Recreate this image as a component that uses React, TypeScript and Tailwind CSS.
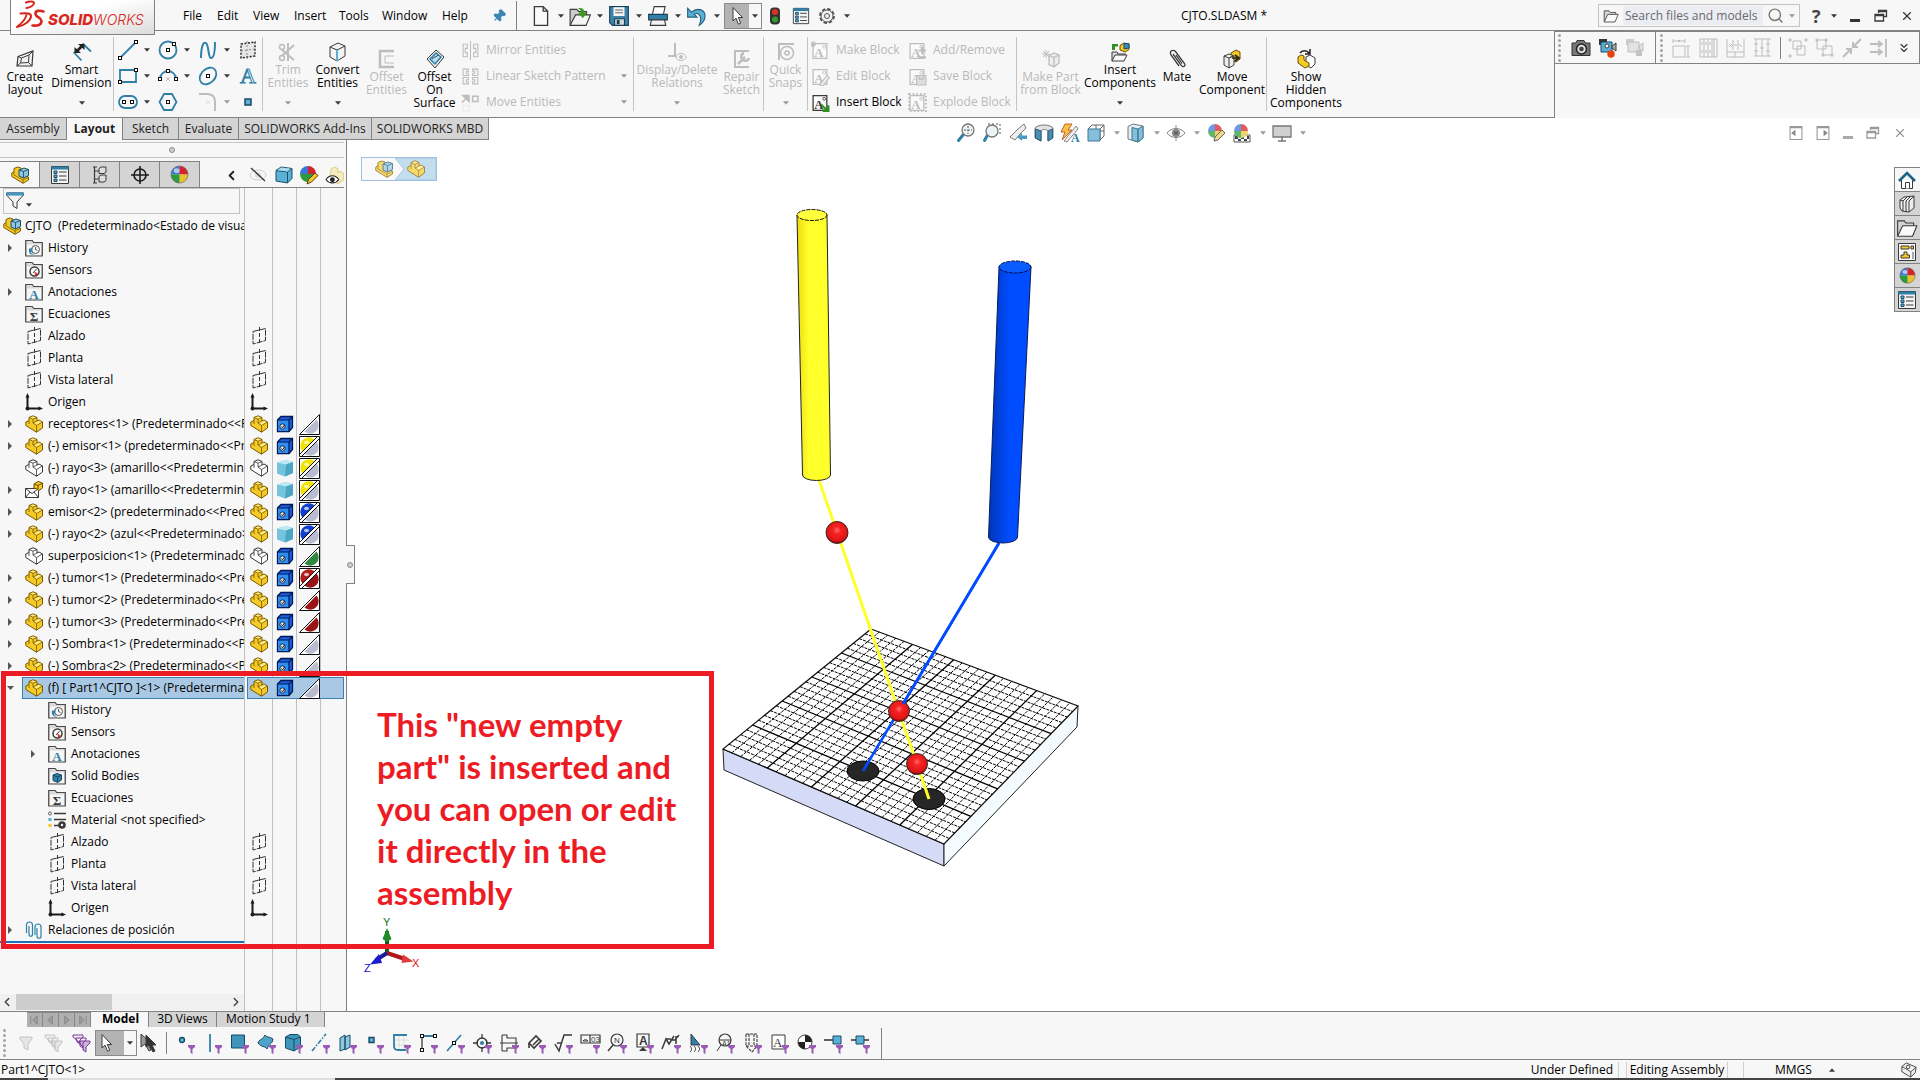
import type { ReactNode } from "react";
import { ChevronLeft, ChevronRight, ChevronsDown, Pin, Search, X } from "lucide-react";
import { clsx } from "clsx";

const DARK = "#3a3a3a";
const BLUE = "#2f7fa8";
const SKY = "#5bb0d6";
const GOLD = "#f5c926";
const MUTED = "#bdbdbd";

interface IconProps {
  size?: number;
  box?: number;
  children: ReactNode;
}

function Icon({ size = 18, box = 18, children }: IconProps) {
  return (
    <svg width={size} height={size} viewBox={`0 0 ${box} ${box}`} fill="none" className="shrink-0" aria-hidden="true">
      {children}
    </svg>
  );
}

function Caret({ muted = false, up = false }: { muted?: boolean; up?: boolean }) {
  return (
    <svg width={6} height={4} viewBox="0 0 7 4" className="shrink-0" aria-hidden="true">
      <path d={up ? "M0 4h7L3.5 0z" : "M0 0h7L3.5 4z"} fill={muted ? "#9a9a9a" : DARK} />
    </svg>
  );
}

/* ---------- shared glyphs ---------- */

function PartIcon({ hollow = false, size = 18 }: { hollow?: boolean; size?: number }) {
  const line = hollow ? "#333" : "#7a5a00";
  return (
    <Icon size={size}>
      <path
        d="M4 2.500 8 .8l4 1.700V6l2-1 3.500 2v6L11.500 17.200.8 10.500V7L4 5.500z"
        fill={hollow ? "#fff" : GOLD}
        stroke={line}
        strokeLinejoin="round"
      />
      <path d="M4 2.500 8 4.200l4-1.700M8 4.200V8l3.500 2.500 6-3.500M11.500 10.500v6.700M4 5.500V9M12 6 8 8" stroke={line} strokeWidth={0.800} />
      {!hollow && <path d="M5.200 2.500 8 1.400l2.800 1.100L8 3.600zM9.500 8 14 5.700 16.300 7l-4.800 2.700z" fill="#fdea8f" />}
    </Icon>
  );
}

function AssemblyIcon({ size = 18 }: { size?: number }) {
  return (
    <Icon size={size}>
      <path d="M3 2.500 6.500 1 10 2v6l7.500 3v3L12 17.300.8 10.500V7L3 5.500z" fill={GOLD} stroke="#7a5a00" strokeLinejoin="round" />
      <path d="M3 5.500V9l9 5v3.300M12 14l5-2.500" stroke="#7a5a00" strokeWidth={0.800} />
      <path d="M8 4 13 2l4.500 1.500v6L12.500 12 8 10z" fill="#8cc6e0" stroke="#1d4e68" strokeLinejoin="round" />
      <path d="M8 4 12.500 5.500V12M12.500 5.500l5-2" stroke="#1d4e68" strokeWidth={0.900} />
    </Icon>
  );
}

function FolderIcon({ children }: { children: ReactNode }) {
  return (
    <Icon>
      <path d="M.7 17V1.500h6.500l1.500 2H17.300V17z" fill="#d9d9d9" stroke="#4a4a4a" strokeWidth={1.200} />
      <path d="M2 5.500h14v10.600H2z" fill="#f6f6f6" />
      {children}
    </Icon>
  );
}

function PlaneIcon() {
  return (
    <Icon>
      <path d="M3 4.500 15.500 1.500V13.500L3 17z" stroke="#333" strokeDasharray="6 1" />
      <path d="M9.500 0v18" stroke="#333" strokeDasharray="4 2" />
    </Icon>
  );
}

function OriginIcon() {
  return (
    <Icon>
      <path d="M2.500 3v12.500H15" stroke="#1b1b1b" strokeWidth={2} />
      <path d="M.5 4.500 2.500 0l2 4.500zM13.500 13.500 18 15.500l-4.500 2z" fill="#1b1b1b" />
      <circle cx={2.500} cy={15.500} r={2} fill="#1b1b1b" />
    </Icon>
  );
}

function BallIcon({ size = 20 }: { size?: number }) {
  return (
    <Icon size={size} box={20}>
      <path d="M10 10V1a9 9 0 0 0-9 9z" fill="#3d74d9" />
      <path d="M10 10h9a9 9 0 0 0-9-9z" fill="#d4232b" />
      <path d="M10 10v9a9 9 0 0 0 9-9z" fill="#e8c12f" />
      <path d="M10 10H1a9 9 0 0 0 9 9z" fill="#2c9b3b" />
      <ellipse cx={7} cy={6} rx={3} ry={2.500} fill="#fff" opacity={0.600} />
      <circle cx={10} cy={10} r={9} stroke="#555" strokeWidth={0.600} />
    </Icon>
  );
}

function CubeIcon({ size = 18 }: { size?: number }) {
  return (
    <Icon size={size}>
      <path d="M1 4.500 6 1l11 1.500v10L12.500 17 1 15z" fill={SKY} stroke="#1d4e68" />
      <path d="M1 4.500 12.500 6v11M12.500 6 17 2.500" stroke="#1d4e68" />
      <path d="M2.200 4.200 6.200 1.500l9.600 1.300L12.400 5.500z" fill="#a9dcf0" />
    </Icon>
  );
}

function ListIcon({ size = 20 }: { size?: number }) {
  return (
    <Icon size={size} box={20}>
      <path d="M1.500 1.500h17v17h-17z" fill="#f3f3f3" stroke={DARK} />
      <path d="M1.500 1.500h17v3h-17z" fill={BLUE} />
      {[7, 11, 15].map((y) => (
        <g key={y}>
          <path d={`M4 ${y - 1}h3v2.500H4z`} fill={SKY} stroke="#174a66" />
          <path d={`M9 ${y}h7.500`} stroke={DARK} />
        </g>
      ))}
    </Icon>
  );
}

function OpenFolder({ size = 20 }: { size?: number }) {
  return (
    <Icon size={size} box={20}>
      <path d="M1.500 17V3.500h6l1.500 2h7V8" fill="#d4d4d4" stroke={DARK} />
      <path d="M1.500 17.500 6 8h13l-4 9.500z" fill="#fafafa" stroke={DARK} strokeLinejoin="round" />
    </Icon>
  );
}

function PointerIcon() {
  return (
    <Icon size={20} box={20}>
      <path d="M6 1.500V15l3-2.800 2.500 6 2.200-1-2.400-5.700H15.500z" fill="#fff" stroke={DARK} strokeLinejoin="round" />
    </Icon>
  );
}

function RestoreIcon({ color }: { color: string }) {
  return (
    <Icon size={14} box={14}>
      <path d="M4.500 4V1.500h8v6H10M4.500 2.500h8" stroke={color} strokeWidth={1.300} />
      <path d="M1 5.500h8.500v6.500H1zM1 6.500h8.500" stroke={color} strokeWidth={1.300} />
    </Icon>
  );
}

/* ---------- title bar ---------- */

const MENUS = [
  { label: "File", width: "w-[34px]" },
  { label: "Edit", width: "w-[36px]" },
  { label: "View", width: "w-[41px]" },
  { label: "Insert", width: "w-[45px]" },
  { label: "Tools", width: "w-[43px]" },
  { label: "Window", width: "w-[60px]" },
  { label: "Help", width: "w-[42px]" },
];

const QUICK_TOOLS: { label: string; icon: ReactNode }[] = [
  {
    label: "New",
    icon: <path d="M4 1.500h8l4 4v13H4zM12 1.500v4h4" fill="#fafafa" stroke={DARK} strokeWidth={1.200} />,
  },
  {
    label: "Open",
    icon: (
      <>
        <path d="M1 18.500V4h6l2 2h7v3" fill="#ccc" stroke={DARK} />
        <path d="M1 18.500 6 9h13.500l-4 9.500z" fill="#f4f4f4" stroke={DARK} />
        <path d="M8 3c4-1 6 1 6 4h2.500L12.500 12 8.500 7H11c0-2-1-3-3-4z" fill="#3c9a1c" />
      </>
    ),
  },
  {
    label: "Save",
    icon: (
      <>
        <path d="M1.500 1.500h17v17H4l-2.500-2.500z" fill="#3d83a8" stroke="#173f57" />
        <path d="M5 2h10v8H5z" fill="#f5f5f5" />
        <path d="M6.500 4.500h7M6.500 7h7" stroke="#666" />
        <path d="M6 12.500h9v6H6z" fill="#cfd8dc" stroke="#173f57" />
        <path d="M8 13.500h2.500v4H8z" fill="#173f57" />
      </>
    ),
  },
  {
    label: "Print",
    icon: (
      <>
        <path d="M5 8 6.500 1.500h10L15 8" fill="#fff" stroke={DARK} />
        <path d="M1.500 8.500h17v5h-17z" fill={BLUE} stroke="#173f57" />
        <path d="M4 13.500h12l1 5H3z" fill="#f3f3f3" stroke={DARK} />
      </>
    ),
  },
  {
    label: "Undo",
    icon: <path d="M1.500 3v8H10L7.300 8.300c4-1.800 7 1 5.700 7.200l-1 3c7-4.500 7.500-14-1-14.500-2.300 0-4.200.9-6 2.500z" fill={SKY} stroke="#22607f" />,
  },
];

function Logo() {
  return (
    <div className="relative z-20 ml-[10px] h-[35px] w-[145px] shrink-0 border border-t-0 border-[#828282] bg-linear-to-br from-white from-40% to-[#dcdcdc]">
      <svg width={143} height={34} viewBox="0 0 143 34" role="img" aria-label="SOLIDWORKS">
        <g stroke="#d9261c" fill="none" strokeWidth={2} strokeLinecap="round" strokeLinejoin="round">
          <path d="M15 2.500c3-1.500 8-1.500 8 .5 0 2.500-4 4.500-7.500 5" />
          <path d="M9.500 13.500c6-.5 11-.5 10.500 3C19.500 21 13 26 6 27c5-4 9-8 9.500-12.500" />
          <path d="M32.500 11.500c-4-1.500-8.500-1-8 2.500s6 3.500 6 7c0 4-4 5-9 4.500" strokeWidth={2.600} />
        </g>
        <text x={37} y={25} fill="#d9261c" fontFamily="Inter, sans-serif" fontStyle="italic" fontSize={15}>
          <tspan fontWeight={800}>SOLID</tspan>
          <tspan fontWeight={300} fontSize={14}>
            WORKS
          </tspan>
        </text>
      </svg>
    </div>
  );
}

function TitleBar() {
  return (
    <header className="flex h-[31px] items-center border-b border-[#828282] bg-[#f7f7f7] pt-px">
      <div className="-mt-px self-start">
        <Logo />
      </div>
      <nav className="ml-7 flex" aria-label="Main menu">
        {MENUS.map((m) => (
          <button key={m.label} type="button" className={clsx("text-left", m.width)}>
            {m.label}
          </button>
        ))}
      </nav>
      <Pin size={14} className="mx-2 rotate-45 fill-[#3b86b5] text-[#3b86b5]" />
      <div className="ml-[2px] flex h-[30px] items-center border-l border-[#828282] pl-[13px]">
        {QUICK_TOOLS.map((tool) => (
          <button key={tool.label} type="button" aria-label={tool.label} className="flex w-[39px] items-center gap-[6px]">
            <Icon size={22} box={20}>
              {tool.icon}
            </Icon>
            <Caret />
          </button>
        ))}
        <button type="button" aria-label="Select" className="-ml-px flex h-[26px] w-[38px] items-center border border-[#8a8a8a]">
          <span className="flex h-full w-6 items-center justify-center bg-[#b3b3b3]">
            <PointerIcon />
          </span>
          <span className="flex flex-1 justify-center">
            <Caret />
          </span>
        </button>
        <button type="button" aria-label="Rebuild" className="ml-1">
          <Icon size={18}>
            <rect x={4} y={0.500} width={10} height={17} rx={4} fill="#333" />
            <circle cx={9} cy={5} r={3} fill="#e0301e" />
            <circle cx={9} cy={12.500} r={3} fill="#2f9a2f" />
          </Icon>
        </button>
        <button type="button" aria-label="Options" className="ml-2">
          <ListIcon size={18} />
        </button>
        <button type="button" aria-label="Settings" className="ml-2 flex items-center gap-2">
          <Icon size={18}>
            <circle cx={9} cy={9} r={7} stroke="#555" strokeWidth={1.800} strokeDasharray="3.500 2" />
            <circle cx={9} cy={9} r={6} fill="#f2f2f2" stroke="#555" />
            <circle cx={9} cy={9} r={2.500} stroke="#555" />
          </Icon>
          <Caret />
        </button>
      </div>
      <h1 className="flex-1 text-center">CJTO.SLDASM *</h1>
      <div className="flex h-[23px] w-[202px] items-center border border-[#c4c4c4] px-1">
        <OpenFolder size={16} />
        <input
          type="text"
          aria-label="Search files and models"
          placeholder="Search files and models"
          className="ml-1 h-[19px] w-[140px] bg-[#ebedf2] px-[2px] placeholder:text-[#6a6a6a]"
        />
        <Search size={19} className="ml-1 text-[#777]" />
        <span className="ml-[5px]">
          <Caret muted />
        </span>
      </div>
      <button type="button" aria-label="Help" className="ml-3 flex w-[30px] items-center gap-[10px] text-[18px] font-bold text-[#444]">
        ?<Caret />
      </button>
      <button type="button" aria-label="Minimize" className="ml-2 flex h-3 w-[10px] items-end">
        <span className="h-[3px] w-full bg-[#333]" />
      </button>
      <button type="button" aria-label="Restore" className="ml-[14px]">
        <RestoreIcon color={DARK} />
      </button>
      <button type="button" aria-label="Close" className="ml-[12px] mr-[6px]">
        <X size={14} className="text-[#333]" />
      </button>
    </header>
  );
}

/* ---------- ribbon ---------- */

interface BigToolProps {
  label: string;
  width: string;
  icon: ReactNode;
  disabled?: boolean;
  menu?: boolean;
}

function BigTool({ label, width, icon, disabled = false, menu = false }: BigToolProps) {
  return (
    <button
      type="button"
      disabled={disabled}
      className={clsx(
        "flex shrink-0 flex-col items-center leading-[13px]",
        width,
        menu ? "pt-[11px]" : "pt-[18px]",
        disabled ? "text-[#b9b9b9]" : "text-black"
      )}
    >
      <Icon size={20} box={20}>
        {icon}
      </Icon>
      <span className="mt-px whitespace-pre text-center">{label}</span>
      {menu && (
        <span className="mt-3">
          <Caret muted={disabled} />
        </span>
      )}
    </button>
  );
}

interface SmallTool {
  label: string;
  icon: ReactNode;
  menu?: boolean;
  enabled?: boolean;
}

function SmallTools({ tools, width }: { tools: SmallTool[]; width: string }) {
  return (
    <div className={clsx("flex shrink-0 flex-col pt-[6px]", width)}>
      {tools.map((t) => (
        <button
          key={t.label}
          type="button"
          disabled={!t.enabled}
          className={clsx("flex h-[26px] items-center whitespace-nowrap pl-[3px] pr-[6px]", t.enabled ? "text-black" : "text-[#b9b9b9]")}
        >
          <Icon size={19}>{t.icon}</Icon>
          <span className="ml-[6px] flex-1 text-left">{t.label}</span>
          {t.menu && <Caret muted />}
        </button>
      ))}
    </div>
  );
}

function Divider() {
  return <div className="my-[6px] w-px shrink-0 bg-[#c4c4c4]" />;
}

const node = (x: number, y: number) => <rect x={x - 1.500} y={y - 1.500} width={3} height={3} fill="#fff" stroke="#111" />;

const SKETCH_TOOLS: { label: string; icon: ReactNode; menu?: boolean; muted?: boolean }[] = [
  { label: "Line", menu: true, icon: <><path d="M2 18 18 2" stroke={BLUE} strokeWidth={1.800} />{node(2, 18)}{node(18, 2)}</> },
  { label: "Circle", menu: true, icon: <><circle cx={10} cy={10} r={8.500} stroke={BLUE} strokeWidth={1.800} />{node(10, 10)}{node(16, 4)}</> },
  { label: "Spline", menu: true, icon: <path d="M3 18C3 8 5 1 8 3s2 15 5 15 4-8 4-16" stroke={BLUE} strokeWidth={2} /> },
  { label: "Plane", icon: <><path d="M3 4 17 2v14L3 18z" fill="#e6e6e6" stroke="#222" strokeDasharray="2 1.500" strokeWidth={1.400} /><path d="M9 1v18M3 11l14-2" stroke="#888" strokeDasharray="2 2" /></> },
  { label: "Rectangle", menu: true, icon: <><path d="M2 4h16v12H2z" stroke={BLUE} strokeWidth={1.800} />{node(18, 4)}{node(2, 16)}</> },
  { label: "Arc", menu: true, icon: <><path d="M2 13a8 8 0 0 1 16 0" stroke={BLUE} strokeWidth={1.800} /><path d="m8 11 4 4m0-4-4 4" stroke={MUTED} />{node(10, 5)}{node(2, 13)}{node(18, 13)}</> },
  { label: "Ellipse", menu: true, icon: <><ellipse cx={10} cy={10} rx={9.500} ry={7} transform="rotate(-45 10 10)" stroke={BLUE} strokeWidth={1.800} />{node(10, 10)}</> },
  { label: "Text", icon: <text x={2} y={17} fontSize={22} fontFamily="Liberation Serif, serif" fill="#fff" stroke={BLUE}>A</text> },
  { label: "Slot", menu: true, icon: <><rect x={1} y={4} width={18} height={12} rx={6} stroke={BLUE} strokeWidth={1.800} />{node(6, 10)}{node(14, 10)}</> },
  { label: "Polygon", icon: <><path d="M6 2h8l4.500 8-4.500 8H6L1.500 10z" stroke={BLUE} strokeWidth={1.800} />{node(10, 10)}</> },
  { label: "Fillet", menu: true, muted: true, icon: <><path d="M1 2h8c6 0 8 3 8 8v9" stroke={MUTED} strokeWidth={2} /><path d="m8 8 4 4m0-4-4 4" stroke="#ddd" /></> },
  { label: "Point", icon: <rect x={7} y={7} width={6} height={6} fill={SKY} stroke="#174a66" strokeWidth={1.500} /> },
];

const ENTITY_TOOLS: SmallTool[] = [
  { label: "Mirror Entities", icon: <path d="M9 0v18M2 3h4v4H4v4h2v4H2zM16 3h-4v4h2v4h-2v4h4z" stroke={MUTED} /> },
  { label: "Linear Sketch Pattern", menu: true, icon: <path d="M2 2h5v2H5v2h2v2H2zM11 2h5v6h-5V6h2V4h-2zM2 10h5v2H5v2h2v2H2zM11 10h5v6h-5v-2h2v-2h-2z" stroke={MUTED} /> },
  { label: "Move Entities", menu: true, icon: <><path d="m1 9 5-5M2 2.500h5.500V8z" stroke={MUTED} fill={MUTED} strokeWidth={1.600} /><path d="M11 3h5v5h-5z" stroke={MUTED} strokeWidth={1.500} /><path d="M2 12h6v5H2z" stroke="#ddd" strokeDasharray="1 1" /></> },
];

const blockBase = (color: string) => (
  <>
    <path d="M2 2.500h13v14H2z" fill="#fbfbfb" stroke={color} strokeWidth={1.200} />
    <text x={3} y={15} fontSize={12} fontWeight={700} fontFamily="Liberation Serif, serif" fill={color}>A</text>
    <circle cx={12.500} cy={5.500} r={1.300} stroke={color} strokeWidth={0.800} />
  </>
);

const BLOCK_TOOLS: SmallTool[] = [
  { label: "Make Block", icon: <>{blockBase(MUTED)}<path d="M2 0v6M-1 3h6M0 1l4 4M4 1 0 5" stroke={MUTED} /></> },
  { label: "Edit Block", icon: <>{blockBase(MUTED)}<path d="m9 16 6-8 2.500 2-6 7.500-3 .8z" fill="#eee" stroke={MUTED} /></> },
  { label: "Insert Block", enabled: true, icon: <>{blockBase(DARK)}<path d="m10 10 5 5v-3.500h2.500V18H11v-2.500h2L9 11.500z" fill="#2f8f1f" /></> },
];

const BLOCK_TOOLS_2: SmallTool[] = [
  { label: "Add/Remove", icon: <>{blockBase(MUTED)}<path d="M10 9h7M13.500 5.500v7M10 15.500h7" stroke={MUTED} strokeWidth={2} /></> },
  { label: "Save Block", icon: <>{blockBase(MUTED)}<path d="M8 8h9v9H8z" fill="#ddd" stroke={MUTED} /><path d="M10.500 8v3.500h4V8" stroke={MUTED} /></> },
  { label: "Explode Block", icon: <>{blockBase(MUTED)}<path d="M1 1h16v16H1z" stroke={MUTED} strokeWidth={2} strokeDasharray="1.500 2" /></> },
];

function Grip() {
  return (
    <div className="flex flex-col gap-[2px]">
      {[0, 1, 2, 3, 4, 5].map((i) => (
        <span key={i} className="h-[3px] w-[3px] rounded-full bg-[#a4a4a4]" />
      ))}
    </div>
  );
}

const ALIGN_ICONS: ReactNode[] = [
  <path d="M1 8h12v11H1zM1 3h12M16 8v11M1 1v4M13 1v4M14 8h4M14 19h4M6 2l2 2M8 2 6 4" />,
  <path d="M1 1h17v18H1zM5 1v18M9 1v18M13 1v18M15 1v18M3 4v3M7 4v3M11 4v3M3 12v3M7 12v3M11 12v3" />,
  <path d="M1 1v18h17V1M1 14h17M7 2v10M12 2v10M3 6l3 3M6 6 3 9M8 7h3M13 6l3 3M9 14v5" />,
  <path d="M1 1h17M1 18h17M3 1v17M9 1v17M15 1v17M1 6h4M7 10h4M13 6h4M1 13h4M13 13h4" />,
];

const GROUP_ICONS: ReactNode[] = [
  <path d="M5 3h8v8H5zM9 8h8v9H9zM1 1h2v2H1zM17 1h2v2h-2zM1 17h2v2H1z" />,
  <path d="M2 2h9v9H2zM8 8h9v9H8zM1 1h2v2H1zM10 1h2v2h-2zM16 16h2v2h-2zM7 16h2v2H7z" />,
  <path d="m19 1-8 8M11 4v5h5M1 19l8-8M9 16v-5H4" strokeWidth={2} />,
  <path d="M1 6h11M9 3l4 3-4 3M1 14h11M9 11l4 3-4 3M17 1v18" strokeWidth={1.800} />,
];

function SideToolbars() {
  return (
    <div className="h-[33px] w-[365px] shrink-0 border-b border-r border-t border-[#828282]">
      <div className="flex h-full items-center">
        <div className="flex h-full w-[101px] items-center gap-[7px] border-r border-[#828282] pl-[3px]">
          <Grip />
          <button type="button" aria-label="Image capture" className="ml-[3px]">
            <Icon size={20} box={20}>
              <path d="M1 5h4l1-2.500h7L14.500 5H19v12.500H1z" fill="#777" stroke="#333" />
              <circle cx={10.500} cy={11} r={5} fill="#ddd" stroke="#222" strokeWidth={1.500} />
              <circle cx={10.500} cy={11} r={2.300} fill="#444" />
            </Icon>
          </button>
          <button type="button" aria-label="Record video">
            <Icon size={20} box={20}>
              <path d="M1 1h8v3H3v3H1z" fill="#333" />
              <path d="M3 4h11v10H3z" fill={SKY} stroke="#174a66" />
              <path d="m14 8 4-3v8l-4-3z" fill="#aaa" stroke={DARK} />
              <circle cx={9} cy={8} r={2} fill="#fff" stroke={DARK} />
              <circle cx={13} cy={16} r={3.700} fill="#e8420c" />
            </Icon>
          </button>
          <button type="button" aria-label="Stop recording" disabled>
            <Icon size={20} box={20}>
              <path d="M1 1h8v3H3v3H1z" fill="#ccc" />
              <path d="M3 4h11v10H3zM14 8l4-3v8l-4-3z" fill="#e2e2e2" stroke={MUTED} />
              <path d="M11 12h6v6h-6z" fill="#c4c4c4" />
            </Icon>
          </button>
        </div>
        <div className="flex flex-1 items-center pl-[4px]">
          <Grip />
          <div className="ml-[9px] flex gap-[7px]">
            {ALIGN_ICONS.map((icon, i) => (
              <button key={i} type="button" disabled aria-label={`Align ${i + 1}`}>
                <Icon size={20} box={20}>
                  <g stroke={MUTED}>{icon}</g>
                </Icon>
              </button>
            ))}
          </div>
          <div className="mx-[7px] h-[22px] w-px bg-[#828282]" />
          <div className="flex gap-[7px]">
            {GROUP_ICONS.map((icon, i) => (
              <button key={i} type="button" disabled aria-label={`Group ${i + 1}`}>
                <Icon size={20} box={20}>
                  <g stroke={MUTED}>{icon}</g>
                </Icon>
              </button>
            ))}
          </div>
          <button type="button" aria-label="More tools" className="ml-2">
            <ChevronsDown size={14} className="text-[#333]" />
          </button>
        </div>
      </div>
    </div>
  );
}

function Ribbon() {
  return (
    <div className="flex bg-[#f7f7f7]">
      <div className="flex h-[87px] flex-1 border-b border-r border-[#828282]">
        <BigTool width="w-[50px]" label={"Create\nlayout"} icon={<><path d="M3 7.500 18 2l-1 15H2z" fill="#f2f2f2" stroke={DARK} strokeWidth={1.200} /><path d="M6.500 9 14 6l-.5 7.500-8 .5zM2 17l3.500-3M17 17l-3.500-3.500M6.500 9 3 7.500M14 6l4-4" stroke={DARK} /></>} />
        <BigTool width="w-[63px]" menu label={"Smart\nDimension"} icon={<><path d="m1.500 10 8 8.500M10.500 1.500l8.500 8" stroke={BLUE} strokeWidth={1.800} /><path d="m5 9 5-5" stroke="#222" strokeWidth={2.600} /><path d="M2.500 5v6H9zM6 2h6.500v6z" fill="#222" /></>} />
        <Divider />
        <div className="grid shrink-0 grid-cols-[40px_40px_40px_28px] content-start pt-[6px]">
          {SKETCH_TOOLS.map((t) => (
            <button key={t.label} type="button" aria-label={t.label} className="flex h-[26px] items-center gap-[6px] pl-1">
              <Icon size={20} box={20}>
                {t.icon}
              </Icon>
              {t.menu && <Caret muted={t.muted} />}
            </button>
          ))}
        </div>
        <Divider />
        <BigTool width="w-[50px]" disabled menu label={"Trim\nEntities"} icon={<><path d="M4 8 16 18M4 14 16 3M10 1v18" stroke={MUTED} strokeWidth={2} /><circle cx={4} cy={5} r={2.500} stroke={MUTED} strokeWidth={1.500} /><circle cx={4} cy={16} r={2.500} stroke={MUTED} strokeWidth={1.500} /></>} />
        <BigTool width="w-[49px]" menu label={"Convert\nEntities"} icon={<><path d="M2 5 10 1l7 3v10l-8 5-7-4z" fill="#f4f4f4" stroke={DARK} /><path d="m2 5 7 3 8-4" stroke={DARK} /><path d="M9 8v11" stroke={SKY} strokeWidth={2} /></>} />
        <BigTool width="w-[49px]" disabled label={"Offset\nEntities"} icon={<><path d="M17 2H3v16h14" stroke={MUTED} strokeWidth={2.500} /><path d="M17 7H8v7h9" stroke={MUTED} /></>} />
        <BigTool width="w-[47px]" label={"Offset\nOn\nSurface"} icon={<><path d="M2 10 11 1l8 7-9 11z" fill="#eee" stroke={DARK} /><path d="m5 10 6-6 5 4-6 7z" fill="#b9e0f0" stroke={BLUE} strokeWidth={1.500} /><path d="M7 10c3-3 5-2 6-4" stroke={DARK} /></>} />
        <SmallTools width="w-[175px]" tools={ENTITY_TOOLS} />
        <Divider />
        <BigTool width="w-[86px]" disabled menu label={"Display/Delete\nRelations"} icon={<><path d="M8 1v13M1 14h13" stroke={MUTED} strokeWidth={2} /><ellipse cx={14} cy={15} rx={5} ry={3.500} fill="#f7f7f7" stroke={MUTED} /><circle cx={14} cy={15} r={2} fill={MUTED} /></>} />
        <BigTool width="w-[43px]" disabled label={"Repair\nSketch"} icon={<><path d="M17 2H3v16h14" stroke={MUTED} strokeWidth={2} /><path d="m6 15 7-7M12 4a4 4 0 1 0 5 5" stroke={MUTED} strokeWidth={2.500} /></>} />
        <Divider />
        <BigTool width="w-[43px]" disabled menu label={"Quick\nSnaps"} icon={<><path d="M2 2h16M3 2v16" stroke={MUTED} strokeWidth={2} /><circle cx={11} cy={11} r={6.500} stroke={MUTED} strokeWidth={1.500} /><circle cx={11} cy={11} r={2} stroke={MUTED} strokeWidth={1.500} /></>} />
        <Divider />
        <SmallTools width="w-[97px]" tools={BLOCK_TOOLS} />
        <SmallTools width="w-[111px]" tools={BLOCK_TOOLS_2} />
        <Divider />
        <BigTool width="w-[67px]" disabled label={"Make Part\nfrom Block"} icon={<><path d="M8 6.500 13 4l5 2v8l-5 4-5-2.500zM8 6.500l5 2V18M13 8.500 18 6" fill="#eee" stroke={MUTED} strokeWidth={1.300} /><path d="M5 1v8M1 5h8M2 2l6 6M8 2 2 8" stroke={MUTED} /></>} />
        <BigTool width="w-[72px]" menu label={"Insert\nComponents"} icon={<><path d="M2 19V10h5l1 2h8" fill="#ddd" stroke={DARK} /><path d="M2 19 5 13h12l-3 6z" fill="#fafafa" stroke={DARK} /><path d="M10 3.500 14 1l5 1.500v5L15 10l-5-2z" fill={GOLD} stroke="#6b4d00" /><path d="M14 1.500h5v4.500l-5 1z" fill="#2f8dc0" stroke="#174a66" /><path d="M2 8V2h6v2.500H5V8z" fill="#2f8f1f" /></>} />
        <BigTool width="w-[42px]" label="Mate" icon={<path d="m6 5 8 11c2 3 5 1 3.500-1.500L8.500 2.500C6 0 2 2 4 6l8 11M9 6l6 8.500" stroke={DARK} strokeWidth={1.300} />} />
        <BigTool width="w-[68px]" label={"Move\nComponent"} icon={<><path d="M9 4 14 1l4 2v7l-4 3-5-2z" fill={GOLD} stroke="#6b4d00" /><path d="M2 7 7 5l5 2v9l-5 3-5-3zM2 7l5 2 5-2M7 9v10" fill="#eee" stroke={DARK} /><path d="M10 9h5M13 6l4 3-4 3" stroke="#222" strokeWidth={1.700} /></>} />
        <Divider />
        <BigTool width="w-[78px]" label={"Show\nHidden\nComponents"} icon={<><path d="M10 8 14 6l5 3v6l-4 4-5-3z" fill="#fff" stroke={DARK} /><path d="M2 11V8l3-2 3 1v4l5 3v3l-4 2-7-5z" fill={GOLD} stroke="#6b4d00" /><path d="M4 4c2-3 7-3 9 0M14 0v5H9" stroke="#222" strokeWidth={1.500} /></>} />
      </div>
      <SideToolbars />
    </div>
  );
}

/* ---------- feature tree ---------- */

type Look = "blue" | "glass";

interface TreeRowData {
  label: string;
  icon: ReactNode;
  depth?: number;
  expander?: "closed" | "open";
  cells?: [ReactNode, ReactNode?, ReactNode?];
  selected?: boolean;
}

function DisplayCube({ look }: { look: Look }) {
  if (look === "glass") {
    return (
      <Icon>
        <path d="M1 3.500 10 1l7 2v11l-8 3.500L1 14.500z" fill="#74c4dd" />
        <path d="M1 3.500 10 1l7 2-7 2.500z" fill="#bfe9f4" />
        <path d="m10 5.500 7-2.500v11l-8 3.500z" fill="#4ba6c4" />
      </Icon>
    );
  }
  return (
    <Icon>
      <path d="M1.500 5 5 1.500h11.500v11L13 16.500H1.500z" fill="#1c5fe0" stroke="#001a55" strokeWidth={1.300} />
      <path d="M2 5h11v11H2z" fill="#2f8cf0" />
      <path d="M1.500 5H13v11.500M13 5l3.500-3.500" stroke="#001a55" strokeWidth={1.200} />
      <circle cx={6.500} cy={11.500} r={2.600} fill="#d9e8f5" stroke="#111" strokeWidth={0.800} />
      <path d="m5.300 11.500 1.200 1.300L8.500 10" stroke="#111" />
    </Icon>
  );
}

function Appearance({ upper, lower }: { upper?: string; lower: string }) {
  return (
    <Icon size={21} box={21}>
      <path d={upper ? "M.5.5h20v20H.5z" : "M.5 20.500 20.500.5v20z"} fill="#fff" stroke="#111" />
      <path d="M5.500 17.500 17.500 5.500a8.500 8.500 0 0 1-12 12z" fill={lower} />
      {upper && (
        <>
          <path d="M3.500 15.500 15.500 3.500a8.500 8.500 0 0 0-12 12z" fill={upper} />
          <ellipse cx={7.500} cy={6.500} rx={2.500} ry={1.800} fill="#fff" opacity={0.700} />
          <path d="M.5 18.500 18.500.5M2.500 20.500l18-18" stroke="#111" />
        </>
      )}
    </Icon>
  );
}

const HistoryIcon = (
  <FolderIcon>
    <circle cx={10.500} cy={10.500} r={4} stroke="#555" />
    <path d="M10.500 8v2.500l2 1" stroke="#555" />
    <path d="M4 9.500 8 9.500 6 14c2 1 3 1 4 .8-3 2-7 .2-6-5.300z" fill={BLUE} />
  </FolderIcon>
);
const SensorsIcon = (
  <FolderIcon>
    <circle cx={9.500} cy={10.500} r={4.500} fill="#fff" stroke={DARK} strokeWidth={1.500} />
    <path d="M9.500 10.500 13 13a4 4 0 0 1-3 1.500z" fill="#e0301e" />
    <path d="m8 12 3.500-4" stroke={DARK} />
  </FolderIcon>
);
const letterFolder = (letter: string, color: string) => (
  <FolderIcon>
    <text x={9} y={15.500} textAnchor="middle" fontSize={13} fontWeight={700} fontFamily="Liberation Serif, serif" fill={color}>
      {letter}
    </text>
  </FolderIcon>
);
const BodiesIcon = (
  <FolderIcon>
    <path d="m5 8 4-1.500L13.500 8v5L9.500 15.500 5 13.500z" fill={BLUE} stroke="#174a66" />
    <path d="m5 8 4.500 2 4-2M9.500 10v5" stroke="#174a66" />
  </FolderIcon>
);
const MaterialIcon = (
  <Icon>
    <path d="M6 2.500h12M6 8.500h12M6 14.500h5" stroke={DARK} strokeWidth={1.600} />
    <circle cx={2} cy={2.500} r={1.500} fill="#fff" stroke="#555" />
    <circle cx={2} cy={8.500} r={1.800} fill={SKY} />
    <circle cx={2} cy={14.500} r={1.800} fill={GOLD} />
    <circle cx={14} cy={14} r={2.500} stroke={DARK} strokeWidth={2.600} />
  </Icon>
);
const MailPartIcon = (
  <Icon>
    <path d="M.5 7.500h13v9H.5zM.5 7.500 7 12.500l6.500-5M.5 16.500 5 11M13.500 16.500 9 11" fill="#fff" stroke={DARK} />
    <path d="m9 3 4-2.500L17.500 2v5L14 9.500 12 8 9 7z" fill={GOLD} stroke="#6b4d00" />
    <path d="m9 3 4 1.500V8M13 4.500 17 2.500" stroke="#6b4d00" />
  </Icon>
);
const MatesIcon = (
  <Icon>
    <path d="M1.500 12V4c0-4 6-4 6 0v9c0 3-3.500 3-3.500 0V5M10 14V6c0-4 6-4 6 0v9c0 3-4 3-4 0V7" stroke={BLUE} strokeWidth={1.200} />
  </Icon>
);

const GREY = "#b9bccf";
const RED = "#9a1616";
const YELLOW = "#f2e400";
const NAVY = "#0f3fd0";

const cells = (look: Look, lower: string, upper?: string, hollow = false): [ReactNode, ReactNode, ReactNode] => [
  <PartIcon hollow={hollow} />,
  <DisplayCube look={look} />,
  <Appearance upper={upper} lower={lower} />,
];

const datum = (label: string, depth = 1): TreeRowData => ({ label, depth, icon: <PlaneIcon />, cells: [<PlaneIcon />] });

const TREE: TreeRowData[] = [
  { label: "CJTO  (Predeterminado<Estado de visualización", depth: 0, icon: <AssemblyIcon /> },
  { label: "History", expander: "closed", icon: HistoryIcon },
  { label: "Sensors", icon: SensorsIcon },
  { label: "Anotaciones", expander: "closed", icon: letterFolder("A", BLUE) },
  { label: "Ecuaciones", icon: letterFolder("Σ", DARK) },
  datum("Alzado"),
  datum("Planta"),
  datum("Vista lateral"),
  { label: "Origen", icon: <OriginIcon />, cells: [<OriginIcon />] },
  { label: "receptores<1> (Predeterminado<<Predeterminado>", expander: "closed", icon: <PartIcon />, cells: cells("blue", GREY) },
  { label: "(-) emisor<1> (predeterminado<<Predeterminado>", expander: "closed", icon: <PartIcon />, cells: cells("blue", GREY, YELLOW) },
  { label: "(-) rayo<3> (amarillo<<Predeterminado>", icon: <PartIcon hollow />, cells: cells("glass", GREY, YELLOW, true) },
  { label: "(f) rayo<1> (amarillo<<Predeterminado>", expander: "closed", icon: MailPartIcon, cells: cells("glass", GREY, YELLOW) },
  { label: "emisor<2> (predeterminado<<Predeterminado>", expander: "closed", icon: <PartIcon />, cells: cells("blue", GREY, NAVY) },
  { label: "(-) rayo<2> (azul<<Predeterminado>", expander: "closed", icon: <PartIcon />, cells: cells("glass", GREY, NAVY) },
  { label: "superposicion<1> (Predeterminado<", icon: <PartIcon hollow />, cells: cells("blue", "#2f8a3d", undefined, true) },
  { label: "(-) tumor<1> (Predeterminado<<Predeterminado>", expander: "closed", icon: <PartIcon />, cells: cells("blue", RED, "#b01c1c") },
  { label: "(-) tumor<2> (Predeterminado<<Predeterminado>", expander: "closed", icon: <PartIcon />, cells: cells("blue", RED) },
  { label: "(-) tumor<3> (Predeterminado<<Predeterminado>", expander: "closed", icon: <PartIcon />, cells: cells("blue", RED) },
  { label: "(-) Sombra<1> (Predeterminado<<Predeterminado>", expander: "closed", icon: <PartIcon />, cells: cells("blue", GREY) },
  { label: "(-) Sombra<2> (Predeterminado<<Predeterminado>", expander: "closed", icon: <PartIcon />, cells: cells("blue", GREY) },
  { label: "(f) [ Part1^CJTO ]<1> (Predeterminado<<", expander: "open", selected: true, icon: <PartIcon />, cells: cells("blue", GREY) },
  { label: "History", depth: 2, icon: HistoryIcon },
  { label: "Sensors", depth: 2, icon: SensorsIcon },
  { label: "Anotaciones", depth: 2, expander: "closed", icon: letterFolder("A", BLUE) },
  { label: "Solid Bodies", depth: 2, icon: BodiesIcon },
  { label: "Ecuaciones", depth: 2, icon: letterFolder("Σ", DARK) },
  { label: "Material <not specified>", depth: 2, icon: MaterialIcon },
  datum("Alzado", 2),
  datum("Planta", 2),
  datum("Vista lateral", 2),
  { label: "Origen", depth: 2, icon: <OriginIcon />, cells: [<OriginIcon />] },
  { label: "Relaciones de posición", expander: "closed", icon: MatesIcon },
];

const INDENT = ["w-[3px]", "w-[22px] pr-[8px]", "w-[45px] pr-[8px]"];

function TreeRow({ row }: { row: TreeRowData }) {
  const depth = row.depth ?? 1;
  const highlight = row.selected && "border-y border-[#3c7fb1] bg-[#a8c8e4]";
  return (
    <div className="flex h-[22px]" role="treeitem" aria-selected={Boolean(row.selected)}>
      <div className="flex w-[245px] items-center overflow-hidden border-r border-[#c0c0c0]">
        <span className={clsx("flex shrink-0 justify-end", INDENT[depth])}>
          {row.expander && (
            <svg width={7} height={8} viewBox="0 0 7 8" className="shrink-0" aria-hidden="true">
              <path d={row.expander === "closed" ? "M1 0v8l4-4z" : "M0 2h7L3.500 6z"} fill="#555" />
            </svg>
          )}
        </span>
        <span
          className={clsx(
            "flex h-full flex-1 items-center whitespace-pre",
            depth === 0 ? "gap-1" : "gap-[5px]",
            row.selected ? "border-l pl-[2px]" : depth > 0 && "pl-[3px]",
            highlight
          )}
        >
          {row.icon}
          {row.label}
        </span>
      </div>
      <div className={clsx("flex", row.selected && "ml-[2px] border-x", highlight)}>
        <div className={clsx("flex items-center", row.selected ? "w-[25px] pl-[2px]" : "w-[28px] border-r border-[#c0c0c0] pl-[5px]")}>
          {row.cells?.[0]}
        </div>
        <div className={clsx("flex w-[24px] items-center pl-[3px]", !row.selected && "border-r border-[#c0c0c0]")}>
          {row.cells?.[1]}
        </div>
        <div className={clsx("flex w-[24px] items-center pl-[2px]", !row.selected && "border-r border-[#c0c0c0]")}>
          {row.cells?.[2]}
        </div>
        {row.selected && <div className="w-[22px]" />}
      </div>
    </div>
  );
}

function ColumnLines() {
  return (
    <>
      <div className="w-[28px] border-r border-[#c0c0c0]" />
      <div className="w-[24px] border-r border-[#c0c0c0]" />
      <div className="w-[24px] border-r border-[#c0c0c0]" />
    </>
  );
}

const PANEL_TABS: { label: string; icon: ReactNode }[] = [
  { label: "Feature tree", icon: <AssemblyIcon /> },
  { label: "Properties", icon: <ListIcon size={20} /> },
  {
    label: "Configurations",
    icon: (
      <Icon>
        <path d="M2 1h4M2 17h4M3.500 1v16M3.500 5H8M3.500 13H8" stroke={DARK} strokeWidth={1.200} />
        <path d="M8 2.500 10 1h5v5l-2 1.500H8zM8 10.500 10 9h5v5.500L13 16H8z" fill="#ddd" stroke={DARK} />
      </Icon>
    ),
  },
  {
    label: "Dimensions",
    icon: (
      <Icon>
        <circle cx={9} cy={9} r={6} stroke="#1b1b1b" strokeWidth={1.600} />
        <path d="M9 0v18M0 9h18" stroke="#1b1b1b" strokeWidth={1.600} />
      </Icon>
    ),
  },
  { label: "Display", icon: <BallIcon size={19} /> },
];

const COMMAND_TABS = [
  { label: "Assembly", width: "w-[67px]" },
  { label: "Layout", width: "w-[56px]" },
  { label: "Sketch", width: "w-[56px]" },
  { label: "Evaluate", width: "w-[60px]" },
  { label: "SOLIDWORKS Add-Ins", width: "w-[133px]" },
  { label: "SOLIDWORKS MBD", width: "w-[117px]" },
];

function CommandTabs() {
  return (
    <div className="relative z-10 flex h-[22px] w-[489px]" role="tablist">
      {COMMAND_TABS.map((tab) => {
        const active = tab.label === "Layout";
        return (
          <button
            key={tab.label}
            type="button"
            role="tab"
            aria-selected={active}
            className={clsx(
              "shrink-0 whitespace-nowrap border-r border-[#828282] text-[#222]",
              tab.width,
              active ? "bg-[#f7f7f7] font-bold" : "border-b bg-[#d4d4d4]"
            )}
          >
            {tab.label}
          </button>
        );
      })}
    </div>
  );
}

function FeaturePanel() {
  return (
    <aside className="flex w-[347px] shrink-0 flex-col">
      <CommandTabs />
      <div className="relative flex flex-1 flex-col border-r border-[#828282] bg-[#f7f7f7]">
        <div className="mr-[2px] mt-[2px] flex h-[16px] items-center justify-center border-y border-[#c4c4c4]">
          <span className="h-[6px] w-[6px] rounded-full border border-[#8c8c8c] bg-[#cfcfcf]" />
        </div>
        <div className="mr-[2px] flex h-[30px] items-end border-b border-[#828282]">
          {PANEL_TABS.map((tab, i) => (
            <button
              key={tab.label}
              type="button"
              aria-label={tab.label}
              className={clsx(
                "flex h-[26px] w-[40px] items-center justify-center border-r border-t border-[#828282]",
                i === 0 ? "bg-[#f7f7f7]" : "bg-[#d4d4d4]"
              )}
            >
              {tab.icon}
            </button>
          ))}
          <div className="flex h-[24px] flex-1 items-center justify-end gap-[6px]">
            <ChevronLeft size={15} strokeWidth={3} className="mr-1 text-[#222]" />
            <Icon>
              <ellipse cx={9} cy={9} rx={8} ry={5} stroke="#ccc" />
              <circle cx={9} cy={9} r={3} fill="#ddd" />
              <path d="m2 2 14 13" stroke={DARK} strokeWidth={1.400} />
            </Icon>
            <span className="ml-[2px]">
              <CubeIcon />
            </span>
            <Icon size={20} box={20}>
              <path d="M9 9V1a8 8 0 0 0-8 8z" fill="#3d74d9" />
              <path d="M9 9h8a8 8 0 0 0-8-8z" fill="#d4232b" />
              <path d="M9 9v8a8 8 0 0 0 8-8zM9 9H1a8 8 0 0 0 8 8z" fill="#2c9b3b" />
              <path d="m8 19 1.500-4.500L16 8l3 2.500-6.500 6.500z" fill={GOLD} stroke="#5a3d10" />
            </Icon>
            <Icon size={19}>
              <path d="M6 2.500 9 1l3 1.500V6l2-1 3.500 2v6l-5 4L4 12z" fill="#f6ecc0" stroke="#e0d090" />
              <path d="M1 13c3-5 9-5 12 0-3 4-9 4-12 0z" fill="#fff" stroke="#222" />
              <circle cx={7} cy={13} r={2.300} fill="#222" />
            </Icon>
          </div>
        </div>
        <div className="flex h-[27px]">
          <div className="w-[245px] border-r border-[#c0c0c0] pl-[3px]">
            <div className="flex h-[26px] w-[237px] items-center gap-[2px] border border-[#c4c4c4] px-[2px]">
              <Icon>
                <path d="M.5 1h17v2L11 10v6.500L7 14v-4L.5 3z" fill="#f4f4f4" stroke={DARK} />
                <path d="M.5 1h17v2H.5z" fill={SKY} stroke={BLUE} />
              </Icon>
              <span className="mt-2 flex">
                <Caret />
              </span>
              <input type="text" aria-label="Filter tree" className="w-full bg-transparent outline-none" />
            </div>
          </div>
          <ColumnLines />
        </div>
        <div role="tree">
          {TREE.map((row, i) => (
            <TreeRow key={i} row={row} />
          ))}
        </div>
        <div className="flex flex-1">
          <div className="flex w-[245px] flex-col justify-between border-r border-[#c0c0c0]">
            <div className="h-[2px] bg-[#1f6fb5]" />
            <div className="mb-px flex h-[16px] items-center bg-[#f0f0f0]">
              <ChevronLeft size={14} strokeWidth={2.500} className="text-[#444]" />
              <div className="ml-[2px] h-full w-[96px] bg-[#cdcdcd]" />
              <ChevronRight size={14} strokeWidth={2.500} className="ml-auto mr-px text-[#444]" />
            </div>
          </div>
          <ColumnLines />
        </div>
        {/* splitter handle */}
        <div className="absolute -right-[9px] top-[405px] z-10 flex h-[39px] w-[9px] items-center justify-center border border-l-0 border-[#828282] bg-[#f7f7f7]">
          <span className="h-[6px] w-[6px] rounded-full border border-[#8c8c8c] bg-[#cfcfcf]" />
        </div>
      </div>
    </aside>
  );
}

/* ---------- graphics area ---------- */

type Point = [number, number];

const TOP: Point = [871, 629];
const RIGHT: Point = [1078, 706];
const BOTTOM: Point = [944, 844];
const LEFT: Point = [723, 749];

const mix = (a: Point, b: Point, t: number): Point => [a[0] + (b[0] - a[0]) * t, a[1] + (b[1] - a[1]) * t];

function GridLines() {
  const steps = Array.from({ length: 24 }, (_, i) => i + 1);
  return (
    <g stroke="#000" fill="none">
      {steps.map((i) => {
        const t = i / 25;
        const [a, b] = [mix(LEFT, BOTTOM, t), mix(TOP, RIGHT, t)];
        const [c, d] = [mix(LEFT, TOP, t), mix(BOTTOM, RIGHT, t)];
        const major = i % 5 === 0;
        return (
          <g key={i} strokeWidth={major ? 1.300 : 1} strokeDasharray={major ? undefined : "3 1"}>
            <path d={`M${a[0]} ${a[1]}L${b[0]} ${b[1]}`} />
            <path d={`M${c[0]} ${c[1]}L${d[0]} ${d[1]}`} />
          </g>
        );
      })}
    </g>
  );
}

function Scene() {
  return (
    <svg
      width={400}
      height={680}
      viewBox="700 200 400 680"
      className="absolute left-[353px] top-[82px]"
      role="img"
      aria-label="Assembly model"
    >
      <defs>
        <radialGradient id="ball" cx="0.5" cy="0.4" r="0.6">
          <stop offset="0" stopColor="#ff6a6a" />
          <stop offset="0.300" stopColor="#f52222" />
          <stop offset="0.800" stopColor="#e01515" />
          <stop offset="1" stopColor="#7a0808" />
        </radialGradient>
        <linearGradient id="yellow">
          <stop offset="0" stopColor="#ecdc10" />
          <stop offset="0.350" stopColor="#ffff2a" />
        </linearGradient>
        <linearGradient id="blue">
          <stop offset="0" stopColor="#0036b8" />
          <stop offset="0.500" stopColor="#004cff" />
        </linearGradient>
      </defs>
      <path d="M723 749 944 844V866L724 770z" fill="#d5dbf7" stroke="#222" strokeLinejoin="round" />
      <path d="M944 844 1078 706 1077 727 944 866z" fill="#f3fbff" stroke="#222" strokeLinejoin="round" />
      <path d="M871 629 1078 706 944 844 723 749z" fill="#fff" stroke="#111" strokeWidth={1.200} />
      <GridLines />
      <ellipse cx={863} cy={771} rx={16} ry={10} fill="#262626" stroke="#000" />
      <ellipse cx={929} cy={799} rx={16} ry={10.500} fill="#262626" stroke="#000" />
      <path d="M999 543 863 771" stroke="#004cff" strokeWidth={2.600} />
      <path d="M819 480 929 799" stroke="#ffff2a" strokeWidth={3} />
      <g stroke="#222" strokeWidth={0.900}>
        <circle cx={837} cy={532.500} r={11} fill="url(#ball)" />
        <circle cx={899} cy={711} r={10.500} fill="url(#ball)" />
        <circle cx={917} cy={764} r={10.500} fill="url(#ball)" />
      </g>
      <path d="M999 543 903 704" stroke="#004cff" strokeWidth={2.600} />
      <path d="M797 215 802.500 475a14 5.500 0 0 0 28 0L827 215z" fill="url(#yellow)" stroke="#222" />
      <ellipse cx={812} cy={215} rx={15} ry={5.500} fill="#ffff3c" stroke="#111" strokeDasharray="4 1" />
      <path d="M999 267 988.500 537a14.500 6 0 0 0 29 0L1031 267z" fill="url(#blue)" stroke="#0a1c55" />
      <ellipse cx={1015} cy={267} rx={16} ry={6} fill="#0a5cff" stroke="#001045" strokeDasharray="4 1" />
    </svg>
  );
}

function Triad() {
  return (
    <svg width={56} height={62} viewBox="0 0 56 62" className="absolute bottom-[34px] left-[17px]" aria-hidden="true">
      <g fontFamily="Liberation Sans, sans-serif" fontSize={11}>
        <path d="M23 38V16" stroke="#14601a" strokeWidth={4} />
        <path d="m18.500 24 4.500-11 4.500 11-4.500 3z" fill="#1f8a28" />
        <path d="m23 38 18 6" stroke="#b01818" strokeWidth={4} />
        <path d="m39 39.500 10.500 7-12 1.500z" fill="#e03c3c" />
        <path d="m23 38-11 7" stroke="#1a1a9c" strokeWidth={4} />
        <path d="m15 39-9 10.500 12-1.500z" fill="#1b1bd0" />
        <text x={19} y={11} fill="#0b7a12">Y</text>
        <text x={48} y={52} fill="#e01010">X</text>
        <text x={0} y={57} fill="#1010d0">Z</text>
      </g>
    </svg>
  );
}

const lens = (x: number, y: number, r: number) => (
  <>
    <path d={`M${x - r + 1} ${y + r - 1} 2.500 17.500`} stroke={BLUE} strokeWidth={3} strokeLinecap="round" />
    <circle cx={x} cy={y} r={r} fill="#eef3f6" stroke="#777" strokeWidth={1.300} />
  </>
);

const VIEW_TOOLS: { label: string; icon: ReactNode; menu?: boolean }[] = [
  { label: "Zoom to fit", icon: <>{lens(12, 7, 6)}<path d="M12 3v8M8 7h8" stroke="#555" strokeDasharray="2 1.500" /></> },
  { label: "Zoom to area", icon: <>{lens(10, 8, 6)}<path d="M6 1h12v12" stroke="#555" strokeDasharray="2 2" /></> },
  { label: "Previous view", icon: <><path d="m2 14 8-8 6-5 2 4-5 5-6 7z" fill="#eee" stroke="#777" /><path d="m9 14 5-4v2.500h5v3.500h-5V18z" fill="#4a9cc4" /></> },
  { label: "Section view", icon: <><path d="M1 5c3-4 15-4 18 0v10l-5 3V8c-2-2-5-2-7 0v10l-6-3z" fill="#e2e2e2" stroke="#777" /><path d="M1.500 6 7 8v10l-5.500-3zM14 8l4.500-2v9L14 18z" fill="#4a8fb0" stroke="#22607f" /></> },
  { label: "Annotation views", icon: <><path d="m5 1-4 8h4l-3 8L12 7H8l4-6z" fill="#f7c24a" stroke="#c0622a" /><path d="M4 18 16 3l2 3L7 19z" fill="#eee" stroke="#888" /><text x={11} y={19} fontSize={12} fontWeight={700} fontFamily="Liberation Serif, serif" fill={BLUE}>A</text></> },
  { label: "View orientation", menu: true, icon: <><path d="m2 6 4-4h12v11l-4 4M14 6l4-4M14 6v11M10 2v4M18 8h-4" stroke="#666" /><path d="M2 6h12v12H2z" fill="#85bfda" stroke="#3a7897" /></> },
  { label: "Display style", menu: true, icon: <><path d="M2 3.500 7 1l10 2v12l-5 4-10-3z" fill="#e6eef2" stroke="#777" /><path d="M6 4.500 12 6v13l-6-2zM12 6l5-3v12l-5 4z" fill="#85bfda" stroke="#3a7897" /></> },
  { label: "Hide and show", menu: true, icon: <><path d="M1 10c4-6 14-6 18 0-4 6-14 6-18 0z" fill="#fafafa" stroke="#888" /><circle cx={10} cy={10} r={4} fill="#888" /><circle cx={10} cy={10} r={1.800} fill="#444" /><path d="M10 2v16" stroke="#888" /></> },
];

const BALL_PATHS = (
  <>
    <path d="M9 8V1a7 7 0 0 0-7 7z" fill="#6c9be6" />
    <path d="M9 8h7a7 7 0 0 0-7-7z" fill="#e25a60" />
    <path d="M9 8v7a7 7 0 0 0 7-7z" fill="#ecd36a" />
    <path d="M9 8H2a7 7 0 0 0 7 7z" fill="#5fb56b" />
  </>
);

const SCENE_TOOLS: { label: string; icon: ReactNode; menu?: boolean }[] = [
  { label: "Edit appearance", icon: <><g>{BALL_PATHS}</g><path d="m8 18 1-4 7-7 3 3-7 7z" fill="#f2d58a" stroke="#666" /></> },
  { label: "Apply scene", menu: true, icon: <><path d="M2 12h16v7H2z" fill="#fff" stroke="#555" /><path d="M3 13h3v3H3zM9 13h3v3H9zM15 13h2v3h-2zM6 16h3v2H6zM12 16h3v2h-3z" fill="#444" />{BALL_PATHS}</> },
  { label: "View settings", menu: true, icon: <><path d="M1 3h18v11H1z" fill="#d0d0d0" stroke="#777" strokeWidth={1.300} /><path d="M10 14v4M6 18h8" stroke="#777" strokeWidth={1.500} /></> },
];

function HeadsUpToolbar() {
  return (
    <div className="flex items-center gap-[6px] pr-[5px]">
      {[...VIEW_TOOLS, ...SCENE_TOOLS].map((t) => (
        <button key={t.label} type="button" aria-label={t.label} className="flex items-center gap-2">
          <Icon size={20} box={20}>
            {t.icon}
          </Icon>
          {t.menu && <Caret muted />}
        </button>
      ))}
    </div>
  );
}

function DocumentControls() {
  return (
    <div className="flex items-center justify-end gap-[13px] pr-[13px]">
      <button type="button" aria-label="Dock left">
        <Icon size={14} box={13}>
          <path d="M1 .5h11v12H1zM1 1.500h11" stroke="#999" />
          <path d="M6 3.500v6l-4-3z" fill="#888" />
        </Icon>
      </button>
      <button type="button" aria-label="Dock right">
        <Icon size={14} box={13}>
          <path d="M1 .5h11v12H1zM1 1.500h11" stroke="#999" />
          <path d="M7 3.500v6l4-3z" fill="#888" />
        </Icon>
      </button>
      <button type="button" aria-label="Minimize document" className="flex h-3 w-[10px] items-end">
        <span className="h-[3px] w-full bg-[#aaa]" />
      </button>
      <button type="button" aria-label="Restore document">
        <RestoreIcon color="#999" />
      </button>
      <button type="button" aria-label="Close document">
        <X size={14} className="text-[#999]" />
      </button>
    </div>
  );
}

function Breadcrumb() {
  return (
    <div className="ml-[14px] mt-[9px] flex h-[24px] w-[76px] border border-[#9fc0e0]">
      <svg width={74} height={22} viewBox="0 0 74 22" fill="none" className="opacity-70" aria-hidden="true">
        <path d="M0 0h33l9 11-9 11H0z" fill="#f7f7f7" />
        <path d="M33 0h41v22H33l9-11z" fill="#a9cfe8" stroke="#7fb0d8" />
        <g transform="translate(13 2)">
          <AssemblyIcon />
        </g>
        <g transform="translate(45 2)">
          <PartIcon />
        </g>
      </svg>
    </div>
  );
}

const TASK_TABS: { label: string; icon: ReactNode }[] = [
  {
    label: "Resources",
    icon: (
      <Icon>
        <path d="M3.500 9v8.500h11V9" fill="#fff" stroke={DARK} />
        <path d="M7.500 17.500v-6h4v6" fill="#fff" stroke={DARK} />
        <path d="m1 10 8-8 8 8" stroke="#1f6488" strokeWidth={2.600} />
      </Icon>
    ),
  },
  {
    label: "Design library",
    icon: (
      <Icon>
        <path d="m2 5 4-3 10-1v12l-5 4-7-1-2-3zM2 5l3 1v10M5 6l4-4M8 6l4-4M8 6v11M11 6l5-5M11 6v11" fill="#eee" stroke={DARK} />
      </Icon>
    ),
  },
  { label: "File explorer", icon: <OpenFolder size={22} /> },
  {
    label: "View palette",
    icon: (
      <Icon>
        <path d="M.5.5h17v17H.5z" fill="#fafafa" stroke={DARK} />
        <path d="M3 3h8v3H3zM13 3h2.500v3H13zM6 9h3v3h2.500v3H3v-3h3z" fill={GOLD} stroke={DARK} />
        <path d="M14 9h2v7h-2z" fill="#aaa" />
      </Icon>
    ),
  },
  { label: "Appearances", icon: <BallIcon size={17} /> },
  { label: "Custom properties", icon: <ListIcon size={20} /> },
];

function TaskPane() {
  return (
    <div className="mt-[19px] flex w-[26px] flex-col border-l border-t border-[#828282]">
      {TASK_TABS.map((t, i) => (
        <button
          key={t.label}
          type="button"
          aria-label={t.label}
          className={clsx("flex h-6 items-center border-b border-[#828282] pl-[2px]", i === 0 ? "bg-[#f7f7f7]" : "bg-[#d4d4d4]")}
        >
          <span className="flex w-5 justify-center">{t.icon}</span>
        </button>
      ))}
    </div>
  );
}

function GraphicsArea() {
  return (
    <section className="relative flex-1 bg-white">
      <Scene />
      <Triad />
      <div className="grid h-[30px] grid-cols-[1fr_auto_1fr] items-center">
        <span />
        <HeadsUpToolbar />
        <DocumentControls />
      </div>
      <div className="flex items-start justify-between">
        <Breadcrumb />
        <TaskPane />
      </div>
    </section>
  );
}

/* ---------- bottom bars ---------- */

const FILTERS: { label: string; icon: ReactNode }[] = [
  { label: "Vertices", icon: <circle cx={7} cy={9} r={2.500} fill={SKY} stroke="#174a66" strokeWidth={1.300} /> },
  { label: "Edges", icon: <path d="M8 3v18" stroke={BLUE} strokeWidth={1.800} /> },
  { label: "Faces", icon: <path d="M2.500 4h13v13h-13z" fill="#3f96bd" stroke="#174a66" /> },
  { label: "Surface bodies", icon: <path d="M2 12c1-4 5-3 7-8 2 3 4 1 8 4-1 6-4 4-6 10-3-4-5-1-9-6z" fill="#4fa3c7" stroke="#174a66" /> },
  { label: "Solid bodies", icon: <path d="M2.500 6 7 3.500h8L17.500 6v10L11 20l-8.500-3zM2.500 6l8.500 2.500v11M11 8.500 17.500 6" fill="#3f96bd" stroke="#174a66" /> },
  { label: "Axes", icon: <path d="M2 20 16 3" stroke={BLUE} strokeWidth={1.600} strokeDasharray="5 1.500 1.500 1.500" /> },
  { label: "Planes", icon: <path d="M3 7 8 4v14l-5 2zM8 6l5-2v12l-5 3z" fill="#8fc7df" stroke="#174a66" /> },
  { label: "Sketch points", icon: <path d="M5 6.500h5v5H5z" fill={SKY} stroke="#174a66" strokeWidth={1.400} /> },
  { label: "Sketches", icon: <><path d="M8 4v15M13 4v15M3 9h15M3 14h15" stroke="#ddd" /><path d="M16 4H3v11c0 3 2 4 4 4h8" stroke={BLUE} strokeWidth={1.800} /></> },
  { label: "Sketch segments", icon: <><path d="M4 19V5h13" stroke={DARK} strokeWidth={1.300} /><path d="M7 5h9" stroke={BLUE} strokeWidth={1.800} />{node(4, 5)}{node(17, 5)}{node(4, 19)}</> },
  { label: "Midpoints", icon: <><path d="M2 20 16 4" stroke={BLUE} strokeWidth={1.600} />{node(9, 12)}</> },
  { label: "Center marks", icon: <><circle cx={10} cy={12} r={5} stroke={DARK} strokeWidth={1.500} /><circle cx={10} cy={12} r={2} fill={BLUE} /><path d="M10 3v5M10 16v5M1 12h5M14 12h5" stroke={DARK} strokeWidth={1.300} /></> },
  { label: "Centerlines", icon: <path d="M3 4v16M3 4h5v3h9v10H8v3H3M1 12h18" stroke={DARK} strokeWidth={1.100} /> },
  { label: "Dimensions", icon: <path d="m3 12 7-7 5 5-7 7zM7 14l6-6M3 12v5" stroke={DARK} strokeWidth={1.600} /> },
  { label: "Surface finish", icon: <path d="m2 13 4 7L11 4h8M4 12h5" stroke={DARK} strokeWidth={1.500} /> },
  { label: "Geometric tolerances", icon: <><path d="M1 4h19v8H1zM10 4v8" stroke={DARK} strokeWidth={1.200} /><path d="M3 10a3 3 0 0 1 5 0z" stroke={DARK} /><text x={11} y={11} fontSize={8} fontFamily="Liberation Sans, sans-serif" fill={DARK}>03</text></> },
  { label: "Balloons", icon: <><circle cx={10} cy={9} r={6} stroke={DARK} strokeWidth={1.200} /><path d="m6 14-5 6" stroke={DARK} strokeWidth={1.400} /><text x={7} y={12} fontSize={8} fontFamily="Liberation Sans, sans-serif" fill={DARK}>N</text></> },
  { label: "Datums", icon: <><path d="M3 3h12v13H3z" stroke={DARK} strokeWidth={1.200} /><path d="M5 20h8l-4-4z" fill={DARK} /><text x={5} y={14} fontSize={12} fontWeight={700} fontFamily="Liberation Sans, sans-serif" fill={DARK}>A</text></> },
  { label: "Weld symbols", icon: <path d="m1 18 4-10 3 5 5-8M5 8h5M10 9h4l4-5M15 5v8" stroke={DARK} strokeWidth={1.500} /> },
  { label: "Weld beads", icon: <><path d="M3 3v11h9z" fill={BLUE} stroke={DARK} /><path d="M2 15c2 2 2 4 0 6M6 15c2 2 2 4 0 6M10 15c2 2 2 4 0 6" stroke={DARK} /></> },
  { label: "Datum targets", icon: <><circle cx={10} cy={9} r={6} stroke={DARK} strokeWidth={1.200} /><path d="M4 9h12M6 14l-4 6" stroke={DARK} /><text x={7} y={15} fontSize={7} fontFamily="Liberation Sans, sans-serif" fill={DARK}>A1</text></> },
  { label: "Cosmetic threads", icon: <path d="M4 3h11v12l-5 6-6-6zM7 3v12M12 3v12M4 15h11" stroke={DARK} strokeWidth={1.100} strokeDasharray="3 1" /> },
  { label: "Blocks", icon: <><path d="M3 4h13v14H3z" fill="#fff" stroke={DARK} /><text x={4} y={16} fontSize={13} fontFamily="Liberation Serif, serif" fill={DARK}>A</text></> },
  { label: "Dowel pins", icon: <><circle cx={9} cy={11} r={7} fill="#fff" stroke={DARK} /><path d="M9 11V4a7 7 0 0 1 7 7zM9 11v7a7 7 0 0 1-7-7z" fill="#222" /></> },
  { label: "Connection points", icon: <><path d="M1 9h9" stroke={DARK} strokeWidth={1.600} /><path d="M10 5h8v8h-8z" fill={SKY} stroke="#174a66" /></> },
  { label: "Routing points", icon: <><path d="M1 9h18" stroke={DARK} strokeWidth={1.600} /><path d="M6 5h8v8H6z" fill={SKY} stroke="#174a66" /></> },
];

function Funnel({ color, stack = false }: { color: string; stack?: boolean }) {
  return (
    <Icon size={20} box={20}>
      {stack && <path d="M1 2h10v2L8 7v4L5 9V7L1 4zM4 5h10v2l-3 3v5l-3-2v-3L4 7z" fill="#eee" stroke={color} />}
      <path d={stack ? "M7 8h11v2l-4 4v5l-3-2v-3l-4-4z" : "M4 4h12v2l-4 5v6l-4-2v-4L4 6z"} fill={color} fillOpacity={0.350} stroke={color} />
    </Icon>
  );
}

function FilterBar() {
  return (
    <div className="flex h-[33px] items-center border-b border-[#828282] pl-[3px]">
      <Grip />
      <button type="button" aria-label="Toggle filters" className="ml-[10px]">
        <Funnel color="#c4c4c4" />
      </button>
      <button type="button" aria-label="Clear filters" className="ml-2">
        <Funnel color="#c4c4c4" stack />
      </button>
      <button type="button" aria-label="All filters" className="ml-2">
        <Funnel color="#7a3a9c" stack />
      </button>
      <button type="button" aria-label="Select" className="ml-[3px] flex h-[26px] w-[42px] items-center border border-[#8a8a8a]">
        <span className="flex h-full w-[28px] items-center bg-[#b3b3b3]">
          <PointerIcon />
        </span>
        <span className="flex flex-1 justify-center">
          <Caret />
        </span>
      </button>
      <button type="button" aria-label="Select other" className="ml-[3px]">
        <Icon size={20} box={20}>
          <path d="M1 1v13l4-3 4 7 2-1-3-6h4z" fill="#999" stroke={DARK} />
          <path d="M6 2v12l3-2 4 7 2-1-3-6h4z" fill="#333" stroke={DARK} />
        </Icon>
      </button>
      <div className="ml-[6px] h-[22px] w-px bg-[#828282]" />
      <div className="ml-[8px] flex">
        {FILTERS.map((f) => (
          <button key={f.label} type="button" aria-label={f.label} className="w-[27px]">
            <Icon size={24} box={24}>
              {f.icon}
              <path d="M13 14h7v2l-2.500 2v5l-2-1v-4L13 16z" fill="#9a5cb4" />
            </Icon>
          </button>
        ))}
      </div>
      <div className="ml-1 h-[31px] w-px bg-[#828282]" />
    </div>
  );
}

const NAV_GLYPHS = [
  { label: "First", d: "M4 3v9M11 3 6 7.500l5 4.500z" },
  { label: "Previous", d: "M10 3 5 7.500l5 4.500z" },
  { label: "Next", d: "m6 3 5 4.500L6 12z" },
  { label: "Last", d: "M12 3v9M5 3l5 4.500L5 12z" },
];

function ModelTabs() {
  return (
    <div className="flex h-[16px] border-t border-[#828282] pl-[27px] leading-[12px]">
      {NAV_GLYPHS.map((g) => (
        <button key={g.label} type="button" disabled aria-label={g.label} className="w-[16px] border-r border-t border-[#888] bg-[#b0b0b0]">
          <Icon size={15} box={16}>
            <path d={g.d} stroke="#8a8a8a" fill="#9c9c9c" />
          </Icon>
        </button>
      ))}
      <button type="button" className="w-[58px] border-r border-[#828282] pb-[2px] pl-[2px] font-bold">
        Model
      </button>
      <button type="button" className="w-[68px] border-r border-[#828282] bg-[#d4d4d4] pb-[2px]">
        3D Views
      </button>
      <button type="button" className="w-[108px] border-r border-[#828282] bg-[#d4d4d4] pb-[2px] pl-[9px] text-left">
        Motion Study 1
      </button>
    </div>
  );
}

function StatusBar() {
  return (
    <footer className="flex h-[18px] items-center pt-[2px]">
      <span className="flex-1 pl-[1px]">Part1^CJTO&lt;1&gt;</span>
      <span className="text-right">Under Defined</span>
      <span className="ml-[5px] h-4 w-[9px] border-x border-[#d0d0d0]" />
      <span className="w-[100px] text-center">Editing Assembly</span>
      <span className="h-4 w-[17px] border-x border-[#d0d0d0]" />
      <button type="button" className="ml-[31px] flex w-[60px] items-center justify-between">
        MMGS
        <Caret up />
      </button>
      <span className="ml-[66px] mr-[3px]">
        <Icon size={16}>
          <path d="M1 5 6 1l11 5-1 6-5 5L1 11zM1 5l10 6 6-5M11 11v6" fill="#eee" stroke={DARK} />
          <circle cx={8} cy={5.500} r={2} stroke={DARK} />
        </Icon>
      </span>
    </footer>
  );
}

function Callout() {
  return (
    <div className="pointer-events-none absolute left-px top-[671px] z-30 h-[278px] w-[713px] border-[5px] border-[#ed1c24]">
      <p className="ml-[371px] mt-[27px] w-[325px] font-['Lato',sans-serif] text-[33px] font-bold leading-[42px] text-[#ed1c24]">
        This "new empty
        <br />
        part" is inserted and
        <br />
        you can open or edit
        <br />
        it directly in the
        <br />
        assembly
      </p>
    </div>
  );
}

export default function App() {
  return (
    <div className="relative flex min-h-screen flex-col bg-[#f7f7f7] font-['Open_Sans','Noto_Sans',sans-serif] text-[12px] leading-4 text-black">
      <TitleBar />
      <Ribbon />
      <main className="flex flex-1">
        <FeaturePanel />
        <GraphicsArea />
      </main>
      <ModelTabs />
      <FilterBar />
      <StatusBar />
      {/* taskbar edge */}
      <div className="flex h-[2px] bg-[#444]">
        <div className="ml-[48px] w-[287px] bg-[#ddd]" />
      </div>
      <Callout />
    </div>
  );
}
